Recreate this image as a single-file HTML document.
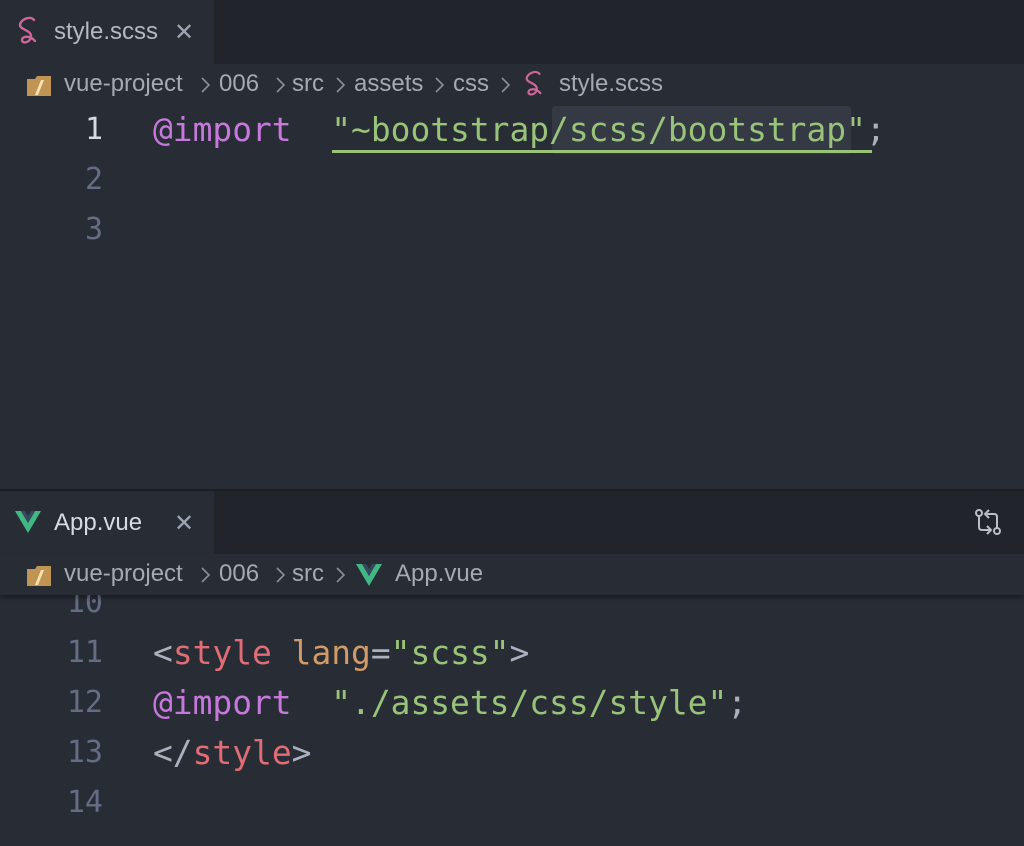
<!DOCTYPE html>
<html><head><meta charset="utf-8"><style>
*{margin:0;padding:0;box-sizing:border-box}
body{width:1024px;height:846px;background:#282c34;overflow:hidden;position:relative;font-family:"Liberation Sans",sans-serif}
.tabbar{position:absolute;left:0;width:1024px;height:64px;background:#21252b}
.tab{position:absolute;left:0;top:0;width:214px;height:64px;background:#282c34}
.tabtxt{position:absolute;left:54px;top:18px;font-size:24px;color:#b5b9c1}
.x{position:absolute;left:174px;top:18px;font-size:24px;color:#9da5b4;font-weight:300}
.bc{position:absolute;left:0;width:1024px;height:40px;background:#282c34;font-size:24px;color:#a4a9b3}
.bc span{position:absolute;top:6px;white-space:nowrap}
.bc .cv{position:absolute;top:13px}
.code{position:absolute;font-family:"DejaVu Sans Mono","Liberation Mono",monospace;font-size:32.9px;white-space:pre;line-height:50px}
.ln{position:absolute;width:103px;text-align:right;font-family:"DejaVu Sans Mono",monospace;font-size:30px;color:#636d83;line-height:50px}
.kw{color:#c678dd}.st{color:#98c379}.tg{color:#e06c75}.at{color:#d19a66}.pl{color:#abb2bf}
</style></head><body>
<!-- top pane -->
<div class="tabbar" style="top:0"><div class="tab">
<svg style="position:absolute;left:16px;top:16px" width="24" height="30" viewBox="0 0 24 30"><path d="M18 4 C14 -1 4 4 4 9 C4 14 16 14 15 21 C14 27 6 28 6 24 C6 20 14 19 19 25" fill="none" stroke="#cd6799" stroke-width="2.4" stroke-linecap="round"/></svg>
<div class="tabtxt">style.scss</div><div class="x">✕</div></div></div>
<div class="bc" style="top:64px">
<svg style="position:absolute;left:27px;top:10px" width="24" height="22" viewBox="0 0 24 22"><path d="M0 5h8l2-3h14v20H0z" fill="#c09553"/><path d="M14 6l3 0-6 15h-3z" fill="#f4e3b0"/></svg>
<span style="left:64px">vue-project</span>
<svg class="cv" style="left:201px" width="9" height="16" viewBox="0 0 9 16"><path d="M1 1l7 7-7 7" fill="none" stroke="#8a909a" stroke-width="1.6"/></svg>
<span style="left:219px">006</span>
<svg class="cv" style="left:276px" width="9" height="16" viewBox="0 0 9 16"><path d="M1 1l7 7-7 7" fill="none" stroke="#8a909a" stroke-width="1.6"/></svg>
<span style="left:292px">src</span>
<svg class="cv" style="left:336px" width="9" height="16" viewBox="0 0 9 16"><path d="M1 1l7 7-7 7" fill="none" stroke="#8a909a" stroke-width="1.6"/></svg>
<span style="left:354px">assets</span>
<svg class="cv" style="left:435px" width="9" height="16" viewBox="0 0 9 16"><path d="M1 1l7 7-7 7" fill="none" stroke="#8a909a" stroke-width="1.6"/></svg>
<span style="left:453px">css</span>
<svg class="cv" style="left:501px" width="9" height="16" viewBox="0 0 9 16"><path d="M1 1l7 7-7 7" fill="none" stroke="#8a909a" stroke-width="1.6"/></svg>
<svg style="position:absolute;left:523px;top:6px" width="22" height="28" viewBox="0 0 24 30"><path d="M18 4 C14 -1 4 4 4 9 C4 14 16 14 15 21 C14 27 6 28 6 24 C6 20 14 19 19 25" fill="none" stroke="#cd6799" stroke-width="2.4" stroke-linecap="round"/></svg>
<span style="left:559px">style.scss</span></div>
<div class="ln" style="top:105px;color:#d7dae0">1</div>
<div class="ln" style="top:155px">2</div>
<div class="ln" style="top:205px">3</div>
<div style="position:absolute;left:552px;top:106px;width:299px;height:48px;background:#343944;border-radius:3px"></div>
<div style="position:absolute;left:332px;top:150px;width:540px;height:3px;background:#98c379"></div>
<div class="code" style="left:153px;top:105px"><span class="kw">@import</span>  <span class="st">"~bootstrap/scss/bootstrap"</span><span class="pl">;</span></div>
<!-- divider -->
<div style="position:absolute;left:0;top:489px;width:1024px;height:2px;background:#1b1e23"></div>
<!-- bottom pane -->
<div class="tabbar" style="top:491px;height:63px"><div class="tab" style="height:63px">
<svg style="position:absolute;left:15px;top:20px" width="26" height="22" viewBox="0 0 26 22"><path d="M0 0h6l7 12 7-12h6L13 22z" fill="#41b883"/><path d="M6 0h4l3 5 3-5h4l-7 12z" fill="#35495e"/></svg>
<div class="tabtxt" style="color:#d7dae0">App.vue</div><div class="x">✕</div></div>
<svg style="position:absolute;left:975px;top:18px" width="26" height="26" viewBox="0 0 26 26" fill="none" stroke="#b9bec8" stroke-width="2"><circle cx="4" cy="4" r="3"/><path d="M4 7v11q0 3 3 3h8M12 17l4 4-4 4"/><circle cx="22" cy="22" r="3"/><path d="M22 19V8q0-3-3-3h-7M14 1l-4 4 4 4"/></svg></div>
<div class="code" style="left:153px;top:628px"><span class="pl">&lt;</span><span class="tg">style</span> <span class="at">lang</span><span class="pl">=</span><span class="st">"scss"</span><span class="pl">&gt;</span>
<span class="kw">@import</span>  <span class="st">"./assets/css/style"</span><span class="pl">;</span>
<span class="pl">&lt;/</span><span class="tg">style</span><span class="pl">&gt;</span></div>
<div class="ln" style="top:578px">10</div>
<div class="ln" style="top:628px">11</div>
<div class="ln" style="top:678px">12</div>
<div class="ln" style="top:728px">13</div>
<div class="ln" style="top:778px">14</div>
<div class="bc" style="top:554px;height:41px;box-shadow:0 3px 4px rgba(0,0,0,0.35)">
<svg style="position:absolute;left:27px;top:10px" width="24" height="22" viewBox="0 0 24 22"><path d="M0 5h8l2-3h14v20H0z" fill="#c09553"/><path d="M14 6l3 0-6 15h-3z" fill="#f4e3b0"/></svg>
<span style="left:64px">vue-project</span>
<svg class="cv" style="left:201px" width="9" height="16" viewBox="0 0 9 16"><path d="M1 1l7 7-7 7" fill="none" stroke="#8a909a" stroke-width="1.6"/></svg>
<span style="left:219px">006</span>
<svg class="cv" style="left:276px" width="9" height="16" viewBox="0 0 9 16"><path d="M1 1l7 7-7 7" fill="none" stroke="#8a909a" stroke-width="1.6"/></svg>
<span style="left:292px">src</span>
<svg class="cv" style="left:336px" width="9" height="16" viewBox="0 0 9 16"><path d="M1 1l7 7-7 7" fill="none" stroke="#8a909a" stroke-width="1.6"/></svg>
<svg style="position:absolute;left:356px;top:10px" width="26" height="22" viewBox="0 0 26 22"><path d="M0 0h6l7 12 7-12h6L13 22z" fill="#41b883"/><path d="M6 0h4l3 5 3-5h4l-7 12z" fill="#35495e"/></svg>
<span style="left:395px">App.vue</span></div>
</body></html>
